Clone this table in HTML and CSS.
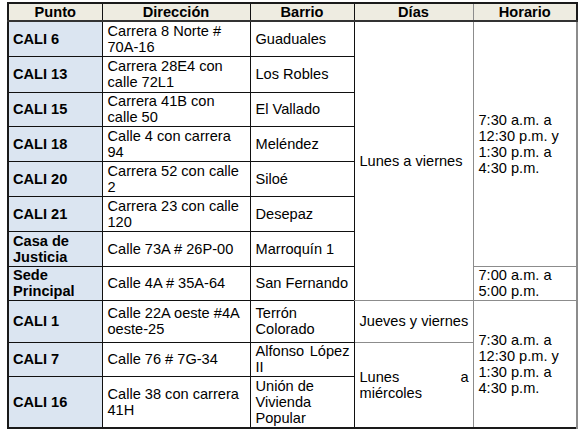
FILE: index.html
```html
<!DOCTYPE html>
<html lang="es">
<head>
<meta charset="utf-8">
<link rel="stylesheet" href="styles.css">
</head>
<body>
<table class="sched">
  <colgroup>
    <col class="c1"><col class="c2"><col class="c3"><col class="c4"><col class="c5">
  </colgroup>
  <thead>
    <tr class="hrow">
      <th>Punto</th><th>Dirección</th><th>Barrio</th><th class="gr">Días</th><th class="gr">Horario</th>
    </tr>
  </thead>
  <tbody>
    <tr class="r35">
      <td class="pt">CALI 6</td><td>Carrera 8 Norte # 70A-16</td><td>Guaduales</td>
      <td class="gr dias" rowspan="8">Lunes a viernes</td>
      <td class="gr hor" rowspan="7">7:30 a.m. a 12:30 p.m. y 1:30 p.m. a 4:30 p.m.</td>
    </tr>
    <tr class="r36"><td class="pt">CALI 13</td><td>Carrera 28E4 con calle 72L1</td><td>Los Robles</td></tr>
    <tr class="r34"><td class="pt">CALI 15</td><td>Carrera 41B con calle 50</td><td>El Vallado</td></tr>
    <tr class="r35"><td class="pt">CALI 18</td><td>Calle 4 con carrera 94</td><td>Meléndez</td></tr>
    <tr class="r35"><td class="pt">CALI 20</td><td>Carrera 52 con calle 2</td><td>Siloé</td></tr>
    <tr class="r35"><td class="pt">CALI 21</td><td>Carrera 23 con calle 120</td><td>Desepaz</td></tr>
    <tr class="r35"><td class="pt">Casa de Justicia</td><td>Calle 73A # 26P-00</td><td>Marroquín 1</td></tr>
    <tr class="r34">
      <td class="pt">Sede Principal</td><td>Calle 4A # 35A-64</td><td>San Fernando</td>
      <td class="gr hor">7:00 a.m. a 5:00 p.m.</td>
    </tr>
    <tr class="r42">
      <td class="pt">CALI 1</td><td>Calle 22A oeste #4A oeste-25</td><td>Terrón Colorado</td>
      <td class="gr dias">Jueves y viernes</td>
      <td class="gr hor" rowspan="3">7:30 a.m. a 12:30 p.m. y 1:30 p.m. a 4:30 p.m.</td>
    </tr>
    <tr class="r34">
      <td class="pt">CALI 7</td><td>Calle 76 # 7G-34</td><td class="just">Alfonso López II</td>
      <td class="gr dias just" rowspan="2">Lunes a miércoles</td>
    </tr>
    <tr class="r52"><td class="pt">CALI 16</td><td>Calle 38 con carrera 41H</td><td>Unión de Vivienda Popular</td></tr>
  </tbody>
</table>
</body>
</html>
```

FILE: styles.css
```css
html, body {
  margin: 0;
  padding: 0;
  background: #ffffff;
}

body {
  padding: 2px 0 0 7px;
  font-family: "Liberation Sans", Arial, sans-serif;
  color: #000000;
}

.sched {
  border-collapse: collapse;
  table-layout: fixed;
  width: 569px;
  border: 2px solid #1a1a1a;
  font-size: 14.6px;
  line-height: 16px;
}

.c1 { width: 94px; }
.c2 { width: 148px; }
.c3 { width: 104px; }
.c4 { width: 119px; }
.c5 { width: 104px; }

.sched th,
.sched td {
  border: 1px solid #111111;
  padding: 0 4px 0 5px;
  vertical-align: middle;
  text-align: left;
  font-weight: normal;
}

.sched th {
  background: #eeece1;
  font-weight: bold;
  text-align: center;
  height: 16px;
  padding: 0 4px;
  border-bottom: 2px solid #333333;
}

.hrow { height: 17px; }

.sched td.pt {
  background: #dbe5f1;
  font-weight: bold;
  padding-left: 4px;
}

.sched .gr {
  border-left-color: #111111;
  border-right-color: #8c8c8c;
}

.sched td.gr {
  border-top-color: #8c8c8c;
  border-bottom-color: #8c8c8c;
}

.sched td.hor {
  border-left-color: #8c8c8c;
  border-right: 2px solid #8c8c8c;
}

.sched th.gr + th.gr {
  border-left-color: #8c8c8c;
}

.sched td.just {
  text-align: justify;
}

.r33 { height: 33px; }
.r34 { height: 34px; }
.r35 { height: 35px; }
.r36 { height: 36px; }
.r42 { height: 42px; }
.r52 { height: 52px; }
```
